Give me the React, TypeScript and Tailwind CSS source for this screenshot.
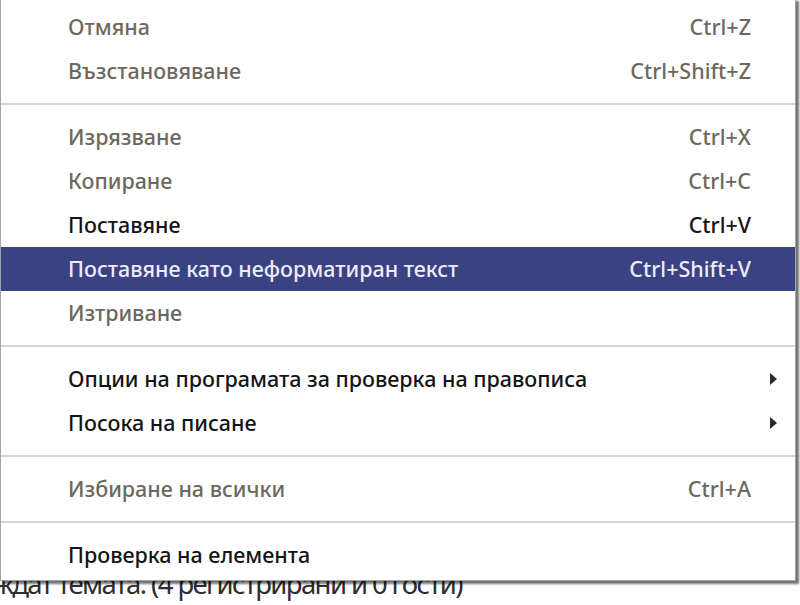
import React from 'react';

type Item =
  | { kind: 'sep' }
  | {
      kind: 'item';
      label: string;
      shortcut?: string;
      disabled?: boolean;
      active?: boolean;
      submenu?: boolean;
    };

const items: Item[] = [
  { kind: 'item', label: 'Отмяна', shortcut: 'Ctrl+Z', disabled: true },
  { kind: 'item', label: 'Възстановяване', shortcut: 'Ctrl+Shift+Z', disabled: true },
  { kind: 'sep' },
  { kind: 'item', label: 'Изрязване', shortcut: 'Ctrl+X', disabled: true },
  { kind: 'item', label: 'Копиране', shortcut: 'Ctrl+C', disabled: true },
  { kind: 'item', label: 'Поставяне', shortcut: 'Ctrl+V' },
  { kind: 'item', label: 'Поставяне като неформатиран текст', shortcut: 'Ctrl+Shift+V', active: true },
  { kind: 'item', label: 'Изтриване', disabled: true },
  { kind: 'sep' },
  { kind: 'item', label: 'Опции на програмата за проверка на правописа', submenu: true },
  { kind: 'item', label: 'Посока на писане', submenu: true },
  { kind: 'sep' },
  { kind: 'item', label: 'Избиране на всички', shortcut: 'Ctrl+A', disabled: true },
  { kind: 'sep' },
  { kind: 'item', label: 'Проверка на елемента' },
];

function Arrow({ light }: { light?: boolean }) {
  return (
    <svg width="7" height="12" viewBox="0 0 7 12" className="block">
      <path d="M0 0 L7 6 L0 12 Z" fill={light ? '#e8e8f4' : '#2a2a2a'} />
    </svg>
  );
}

export default function App() {
  return (
    <div
      className="relative w-[800px] h-[605px] overflow-hidden bg-white"
      style={{ fontFamily: '"Noto Sans", "Open Sans", sans-serif' }}
    >
      {/* page content under the menu */}
      <div className="absolute left-[-7px] top-[566px] text-[27.5px] leading-[36px] tracking-[-1.6px] text-[#2e2e2e] whitespace-nowrap">
        ждат темата. (4 регистрирани и 0 гости)
      </div>

      <div className="absolute left-0 top-[-2px] w-[796px] bg-white border border-[#a3a3a3] shadow-[3px_3px_2px_rgba(0,0,0,0.55)] pt-[6px] pb-[3px]">
        {items.map((it, i) =>
          it.kind === 'sep' ? (
            <div key={i} className="h-[22px] flex items-center">
              <div className="h-[2px] w-full bg-[#d9d6d2]" />
            </div>
          ) : (
            <div
              key={i}
              className={
                'h-[44px] flex items-center pl-[67px] text-[21.5px] font-medium ' +
                (it.active
                  ? 'bg-[#3b4284] text-[#ececf6]'
                  : it.disabled
                  ? 'text-[#6c685e]'
                  : 'text-[#141414]')
              }
            >
              <span className="flex-1 whitespace-nowrap">{it.label}</span>
              {it.shortcut && <span className="whitespace-nowrap">{it.shortcut}</span>}
              <span className="w-[44px] flex justify-center">
                {it.submenu && <Arrow light={it.active} />}
              </span>
            </div>
          )
        )}
      </div>
    </div>
  );
}
